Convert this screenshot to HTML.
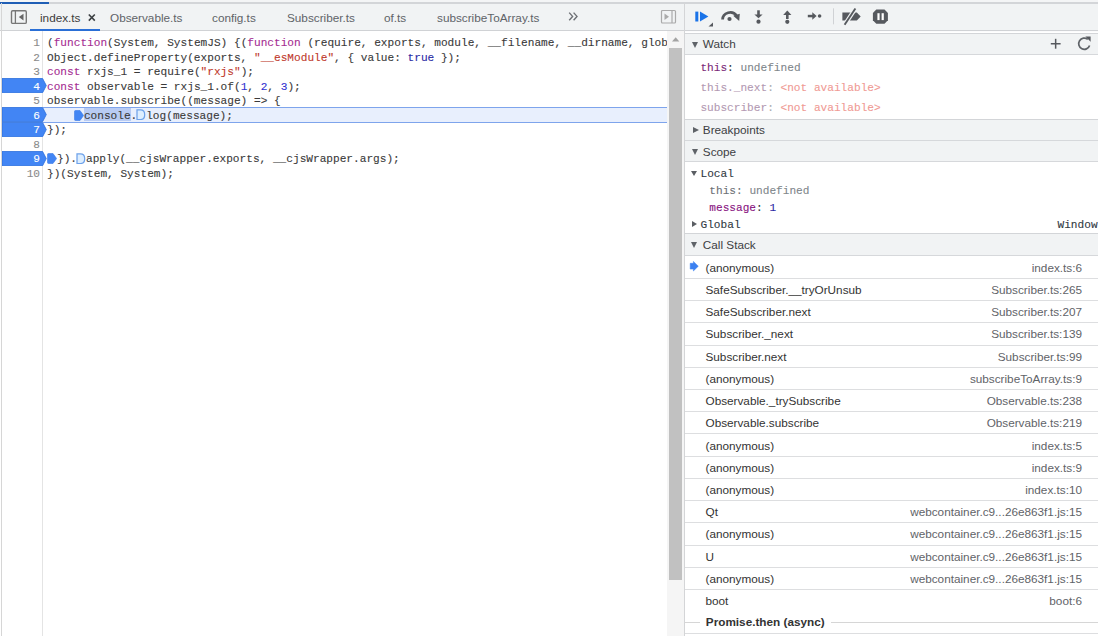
<!DOCTYPE html>
<html><head><meta charset="utf-8">
<style>
*{box-sizing:border-box;margin:0;padding:0}
html,body{width:1098px;height:636px;overflow:hidden;background:#fff;position:relative}
body{font-family:"Liberation Sans",sans-serif;color:#303942}
.abs{position:absolute}
.ui{font-family:"Liberation Sans",sans-serif;font-size:11.75px;white-space:nowrap;line-height:14px;color:#333}
.mono{font-family:"Liberation Mono",monospace;white-space:pre;-webkit-text-stroke:0.1px currentColor;font-size:11.13px;line-height:14.56px}
/* top strip */
#topw{left:0;top:0;width:1098px;height:2px;background:#f4f5f6}
#topblue{left:0;top:1.5px;width:48.5px;height:2px;background:#1f5eb5}
#topgrey{left:48.5px;top:2px;width:1050px;height:1.5px;background:#d3d5d8}
/* left tab bar */
#tabbar{left:0;top:3.5px;width:684px;height:27px;background:#f1f3f4;border-bottom:1px solid #d0d2d5}
#leftedge{left:1.2px;top:3px;width:1.1px;height:633px;background:#d6d6d6}
.tab{top:11px;color:#5f6368}
#tabul{left:30px;top:28.5px;width:70px;height:2px;background:#2a6fd6}
/* editor */
#editor{left:2.3px;top:31px;width:666px;height:605px;background:#fff;overflow:hidden}
#gutline{left:42.3px;top:31px;width:1px;height:605px;background:#e4e4e4}
.ln{left:0;width:40px;text-align:right;color:#8a8a8a}
.code{left:47px;color:#3a3a3a}
.kw{color:#a52d92}
.str{color:#c0392b}
.num{color:#3030d0}
.tru{color:#2b2ba5}
.bp{left:2px;height:14.6px;width:41px;background:#4285f4;border-top:1px solid #2a6fd9;border-bottom:1px solid #2a6fd9}
/* scrollbar */
#sbtrack{left:667px;top:31px;width:17px;height:605px;background:#f5f5f5}
#sbthumb{left:669.2px;top:48px;width:12.7px;height:531.7px;background:#c1c1c1}
/* split */
#split{left:684.2px;top:3px;width:1.1px;height:633px;background:#d4d5d7}
/* right */
#rtool{left:685px;top:3.5px;width:413px;height:27px;background:#f1f3f4;border-bottom:1px solid #d0d2d5}
.hdr{left:685px;width:413px;background:#f1f3f4;border-bottom:1px solid #d6d8db}
.hdrt{color:#3c4043}
.tri{width:0;height:0;border-left:3.5px solid transparent;border-right:3.5px solid transparent;border-top:6px solid #5f6368}
.trir{width:0;height:0;border-top:3.5px solid transparent;border-bottom:3.5px solid transparent;border-left:6px solid #5f6368}
.row{left:685px;width:413px;height:22.2px;border-bottom:1px solid #e6e6e6}
.fn{left:705.5px;color:#333}
.loc{right:16px;color:#5f6368;text-align:right}
</style></head><body>
<div class="abs" id="topw"></div>
<div class="abs" id="tabbar"></div>
<div class="abs" id="topblue"></div>
<div class="abs" id="topgrey"></div>

<!-- sidebar toggle -->
<svg class="abs" style="left:10px;top:9px" width="18" height="16" viewBox="0 0 18 16">
  <rect x="1.5" y="1.8" width="14.8" height="12.6" rx="1.2" fill="none" stroke="#777" stroke-width="1.4"/>
  <line x1="5.4" y1="1.8" x2="5.4" y2="14.4" stroke="#777" stroke-width="1.3"/>
  <path d="M13.5 4.8 L8.8 8.1 L13.5 11.4 Z" fill="#666"/>
</svg>

<div class="abs ui tab" style="left:40px;color:#3c3c3c">index.ts</div>
<svg class="abs" style="left:87px;top:12.6px" width="10" height="10" viewBox="0 0 10 10"><path d="M1.8 1.5 L7.8 7.6 M7.8 1.5 L1.8 7.6" stroke="#3c4043" stroke-width="1.6"/></svg>
<div class="abs ui tab" style="left:110px">Observable.ts</div>
<div class="abs ui tab" style="left:212px">config.ts</div>
<div class="abs ui tab" style="left:287px">Subscriber.ts</div>
<div class="abs ui tab" style="left:384px">of.ts</div>
<div class="abs ui tab" style="left:437px">subscribeToArray.ts</div>
<svg class="abs" style="left:566px;top:10px" width="14" height="13" viewBox="0 0 14 13"><path d="M3.2 2.6 L6.6 6.4 L3.2 10.2 M7.6 2.6 L11 6.4 L7.6 10.2" fill="none" stroke="#6d7075" stroke-width="1.4"/></svg>
<div class="abs" id="tabul"></div>
<svg class="abs" style="left:660px;top:9px" width="17" height="16" viewBox="0 0 17 16">
  <rect x="1.5" y="1.5" width="14" height="12.5" rx="1" fill="none" stroke="#aaa" stroke-width="1.2"/>
  <line x1="12" y1="1.5" x2="12" y2="14" stroke="#aaa" stroke-width="1.2"/>
  <path d="M4.5 4.5 L9 7.75 L4.5 11 Z" fill="#aaa"/>
</svg>

<div class="abs" id="leftedge"></div>
<div class="abs" id="editor"></div>
<div class="abs" id="gutline"></div>
<div class="abs" style="left:43px;top:106.5px;width:624px;height:16px;background:#e8effd;border-top:1.2px solid #7ea4ec;border-bottom:1.2px solid #7ea4ec"></div>
<div class="abs" style="left:83.9px;top:107.50px;width:46.8px;height:13.96px;background:#b8cbf3"></div>
<svg class="abs" style="left:2px;top:78.08px" width="46" height="15.2" viewBox="0 0 46 15.2"><path d="M0 0.5 H40.6 L44.3 7.6 L40.6 14.7 H0 Z" fill="#4285f4" stroke="#2b6fdc" stroke-width="0.8"/></svg>
<svg class="abs" style="left:2px;top:107.20px" width="46" height="15.2" viewBox="0 0 46 15.2"><path d="M0 0.5 H40.6 L44.3 7.6 L40.6 14.7 H0 Z" fill="#4285f4" stroke="#2b6fdc" stroke-width="0.8"/></svg>
<svg class="abs" style="left:2px;top:121.76px" width="46" height="15.2" viewBox="0 0 46 15.2"><path d="M0 0.5 H40.6 L44.3 7.6 L40.6 14.7 H0 Z" fill="#4285f4" stroke="#2b6fdc" stroke-width="0.8"/></svg>
<svg class="abs" style="left:2px;top:150.88px" width="46" height="15.2" viewBox="0 0 46 15.2"><path d="M0 0.5 H40.6 L44.3 7.6 L40.6 14.7 H0 Z" fill="#4285f4" stroke="#2b6fdc" stroke-width="0.8"/></svg>
<div class="abs mono code" style="left:47.00px;top:36.00px">(<span class="kw">function</span>(System, SystemJS) {(<span class="kw">function</span> (require, exports, module, __filename, __dirname, global) {</div>
<div class="abs mono code" style="left:47.00px;top:50.56px">Object.defineProperty(exports, <span class="str">"__esModule"</span>, { value: <span class="tru">true</span> });</div>
<div class="abs mono code" style="left:47.00px;top:65.12px"><span class="kw">const</span> rxjs_1 = require(<span class="str">"rxjs"</span>);</div>
<div class="abs mono code" style="left:47.00px;top:79.68px"><span class="kw">const</span> observable = rxjs_1.of(<span class="num">1</span>, <span class="num">2</span>, <span class="num">3</span>);</div>
<div class="abs mono code" style="left:47.00px;top:94.24px">observable.subscribe((message) =&gt; {</div>
<div class="abs mono code" style="left:83.90px;top:108.80px">console.</div>
<div class="abs mono code" style="left:146.20px;top:108.80px">log(message);</div>
<div class="abs mono code" style="left:47.00px;top:123.36px">});</div>

<div class="abs mono code" style="left:57.00px;top:152.48px">}).</div>
<div class="abs mono code" style="left:86.00px;top:152.48px">apply(__cjsWrapper.exports, __cjsWrapper.args);</div>
<div class="abs mono code" style="left:47.00px;top:167.04px">})(System, System);</div>
<div class="abs mono ln" style="top:36.00px;color:#8a8a8a">1</div>
<div class="abs mono ln" style="top:50.56px;color:#8a8a8a">2</div>
<div class="abs mono ln" style="top:65.12px;color:#8a8a8a">3</div>
<div class="abs mono ln" style="top:79.68px;color:#fff">4</div>
<div class="abs mono ln" style="top:94.24px;color:#8a8a8a">5</div>
<div class="abs mono ln" style="top:108.80px;color:#fff">6</div>
<div class="abs mono ln" style="top:123.36px;color:#fff">7</div>
<div class="abs mono ln" style="top:137.92px;color:#8a8a8a">8</div>
<div class="abs mono ln" style="top:152.48px;color:#fff">9</div>
<div class="abs mono ln" style="top:167.04px;color:#8a8a8a">10</div>
<svg class="abs" style="left:73.80px;top:109.80px" width="10" height="11" viewBox="0 0 10 11"><path d="M1.5 0.5 H6 L9.6 5.5 L6 10.5 H1.5 Q0.5 10.5 0.5 9.5 V1.5 Q0.5 0.5 1.5 0.5 Z" fill="#4285f4" stroke="#3a7be8" stroke-width="0.6"/></svg>
<svg class="abs" style="left:136.2px;top:109.2px" width="10" height="11" viewBox="0 0 10 11"><path d="M1 0.9 H4.4 Q8.7 0.9 8.7 5.7 Q8.7 10.5 4.4 10.5 H1 Z" fill="#ddeeff" stroke="#6ea2ea" stroke-width="1.25"/></svg>
<svg class="abs" style="left:47.00px;top:153.48px" width="10" height="11" viewBox="0 0 10 11"><path d="M1.5 0.5 H6 L9.6 5.5 L6 10.5 H1.5 Q0.5 10.5 0.5 9.5 V1.5 Q0.5 0.5 1.5 0.5 Z" fill="#4285f4" stroke="#3a7be8" stroke-width="0.6"/></svg>
<svg class="abs" style="left:76.2px;top:152.9px" width="10" height="11" viewBox="0 0 10 11"><path d="M1 0.9 H4.4 Q8.7 0.9 8.7 5.7 Q8.7 10.5 4.4 10.5 H1 Z" fill="#ddeeff" stroke="#6ea2ea" stroke-width="1.25"/></svg>

<div class="abs" id="sbtrack"></div>
<div class="abs" id="sbthumb"></div>
<svg class="abs" style="left:670px;top:35px" width="12" height="8" viewBox="0 0 12 8"><path d="M2 6.6 L5.7 2.3 L9.3 6.6 Z" fill="#a3a3a3"/></svg>
<div class="abs" id="split"></div>

<div class="abs" id="rtool"></div>

<!-- toolbar icons -->
<svg class="abs" style="left:685px;top:0px" width="413" height="31" viewBox="685 0 413 31">
  <rect x="695.3" y="11.6" width="3" height="9.9" fill="#1a73e8"/>
  <path d="M700 11.6 L708.4 16.55 L700 21.5 Z" fill="#1a73e8"/>
  <path d="M708.5 26.4 L713 22.6 L713 26.4 Z" fill="#56595e"/>
  <path d="M722.6 19.6 A7.6 7.2 0 0 1 736.6 15.8" fill="none" stroke="#56595e" stroke-width="2.8"/>
  <path d="M733.2 15.8 L739.8 13.8 L739.2 20.9 Z" fill="#56595e"/>
  <circle cx="729.5" cy="19" r="2.1" fill="#56595e"/>
  <rect x="757.2" y="10.3" width="2.6" height="5.5" fill="#56595e"/>
  <path d="M754.4 14.6 L762.6 14.6 L758.5 18.2 Z" fill="#56595e"/>
  <circle cx="758.5" cy="21.7" r="2.1" fill="#56595e"/>
  <path d="M783.2 14.9 L791.4 14.9 L787.3 10.6 Z" fill="#56595e"/>
  <rect x="786" y="14" width="2.6" height="5" fill="#56595e"/>
  <circle cx="787.3" cy="21.8" r="2.1" fill="#56595e"/>
  <rect x="807.8" y="14.8" width="5.8" height="2.5" fill="#56595e"/>
  <path d="M812.3 12.2 L816.6 16 L812.3 19.8 Z" fill="#56595e"/>
  <circle cx="819.6" cy="16" r="1.8" fill="#56595e"/>
  <rect x="833" y="8.3" width="1" height="16" fill="#d0d2d5"/>
  <path d="M842.4 12.4 H856.8 L860.7 16.5 L856.8 20.6 H842.4 Z" fill="#56595e"/>
  <path d="M855.4 8.5 L844.6 24.8" stroke="#f1f3f4" stroke-width="4.2"/>
  <path d="M855.4 8.5 L844.6 24.8" stroke="#56595e" stroke-width="1.9"/>
  <path d="M876.3 9.5 H884.5 L887.9 13 V20.2 L884.5 23.7 H876.3 L872.9 20.2 V13 Z" fill="#56595e"/>
  <rect x="877.4" y="13.2" width="2.2" height="6.9" fill="#fff"/>
  <rect x="881.6" y="13.2" width="2.2" height="6.9" fill="#fff"/>
</svg>
<div class="abs" style="left:685px;top:30.5px;width:413px;height:1.5px;background:#fbfbfc"></div>
<div class="abs hdr" style="top:32.5px;height:22px;border-top:1px solid #d3d5d8"></div>
<div class="abs tri" style="left:691.6px;top:41.5px"></div>
<div class="abs ui hdrt" style="left:702.8px;top:37px">Watch</div>
<svg class="abs" style="left:1045px;top:33px" width="53" height="21" viewBox="1045 33 53 21">
  <rect x="1050.8" y="43" width="9.8" height="1.5" fill="#56595e"/>
  <rect x="1054.9" y="38.8" width="1.5" height="9.9" fill="#56595e"/>
  <path d="M1089.6 45.5 A5.6 5.6 0 1 1 1087.8 39.3" fill="none" stroke="#5f6368" stroke-width="1.7"/>
  <path d="M1085.4 36.6 L1090.6 36.6 L1090.6 41.8 Z" fill="#56595e"/>
</svg>
<!-- watch body -->
<div class="abs mono" style="left:700.4px;top:60.8px;color:#7a2877">this<span style="color:#303942">: </span><span style="color:#80868b">undefined</span></div>
<div class="abs mono" style="left:700.4px;top:80.5px;color:#b399b2">this._next<span style="color:#a9acb0">: </span><span style="color:#f09a94">&lt;not available&gt;</span></div>
<div class="abs mono" style="left:700.4px;top:100.5px;color:#b399b2">subscriber<span style="color:#a9acb0">: </span><span style="color:#f09a94">&lt;not available&gt;</span></div>
<!-- breakpoints -->
<div class="abs hdr" style="top:118.5px;height:22px;border-top:1px solid #d3d5d8"></div>
<div class="abs trir" style="left:692.5px;top:126.5px"></div>
<div class="abs ui hdrt" style="left:702.8px;top:122.5px">Breakpoints</div>
<!-- scope -->
<div class="abs hdr" style="top:140.5px;height:21.5px"></div>
<div class="abs tri" style="left:691.6px;top:149px"></div>
<div class="abs ui hdrt" style="left:702.8px;top:144.5px">Scope</div>
<div class="abs" style="left:690.8px;top:171.1px;width:0;height:0;border-left:3.3px solid transparent;border-right:3.3px solid transparent;border-top:5.6px solid #5a5e63"></div>
<div class="abs mono" style="left:700.5px;top:166.8px;color:#303942">Local</div>
<div class="abs mono" style="left:709.3px;top:183.8px;color:#6c7075">this<span>: </span><span style="color:#80868b">undefined</span></div>
<div class="abs mono" style="left:709.3px;top:200.7px;color:#881280">message<span style="color:#303942">: </span><span style="color:#2a2aa5">1</span></div>
<div class="abs" style="left:691.5px;top:220.7px;width:0;height:0;border-top:3.3px solid transparent;border-bottom:3.3px solid transparent;border-left:5.8px solid #5a5e63"></div>
<div class="abs mono" style="left:700.5px;top:217.8px;color:#303942">Global</div>
<div class="abs mono" style="left:1057.5px;top:217.8px;color:#303942">Window</div>
<!-- call stack -->
<div class="abs hdr" style="top:233px;height:22.5px;border-top:1px solid #d3d5d8"></div>
<div class="abs tri" style="left:691.3px;top:241.5px"></div>
<div class="abs ui hdrt" style="left:702.8px;top:237.5px">Call Stack</div>
<div class="abs" style="left:685px;top:277.92px;width:413px;height:1px;background:#dddee0"></div>
<div class="abs ui fn" style="top:260.80px">(anonymous)</div>
<div class="abs ui loc" style="top:260.80px">index.ts:6</div>
<div class="abs" style="left:685px;top:300.14px;width:413px;height:1px;background:#dddee0"></div>
<div class="abs ui fn" style="top:283.02px">SafeSubscriber.__tryOrUnsub</div>
<div class="abs ui loc" style="top:283.02px">Subscriber.ts:265</div>
<div class="abs" style="left:685px;top:322.36px;width:413px;height:1px;background:#dddee0"></div>
<div class="abs ui fn" style="top:305.24px">SafeSubscriber.next</div>
<div class="abs ui loc" style="top:305.24px">Subscriber.ts:207</div>
<div class="abs" style="left:685px;top:344.58px;width:413px;height:1px;background:#dddee0"></div>
<div class="abs ui fn" style="top:327.46px">Subscriber._next</div>
<div class="abs ui loc" style="top:327.46px">Subscriber.ts:139</div>
<div class="abs" style="left:685px;top:366.80px;width:413px;height:1px;background:#dddee0"></div>
<div class="abs ui fn" style="top:349.68px">Subscriber.next</div>
<div class="abs ui loc" style="top:349.68px">Subscriber.ts:99</div>
<div class="abs" style="left:685px;top:389.02px;width:413px;height:1px;background:#dddee0"></div>
<div class="abs ui fn" style="top:371.90px">(anonymous)</div>
<div class="abs ui loc" style="top:371.90px">subscribeToArray.ts:9</div>
<div class="abs" style="left:685px;top:411.24px;width:413px;height:1px;background:#dddee0"></div>
<div class="abs ui fn" style="top:394.12px">Observable._trySubscribe</div>
<div class="abs ui loc" style="top:394.12px">Observable.ts:238</div>
<div class="abs" style="left:685px;top:433.46px;width:413px;height:1px;background:#dddee0"></div>
<div class="abs ui fn" style="top:416.34px">Observable.subscribe</div>
<div class="abs ui loc" style="top:416.34px">Observable.ts:219</div>
<div class="abs" style="left:685px;top:455.68px;width:413px;height:1px;background:#dddee0"></div>
<div class="abs ui fn" style="top:438.56px">(anonymous)</div>
<div class="abs ui loc" style="top:438.56px">index.ts:5</div>
<div class="abs" style="left:685px;top:477.90px;width:413px;height:1px;background:#dddee0"></div>
<div class="abs ui fn" style="top:460.78px">(anonymous)</div>
<div class="abs ui loc" style="top:460.78px">index.ts:9</div>
<div class="abs" style="left:685px;top:500.12px;width:413px;height:1px;background:#dddee0"></div>
<div class="abs ui fn" style="top:483.00px">(anonymous)</div>
<div class="abs ui loc" style="top:483.00px">index.ts:10</div>
<div class="abs" style="left:685px;top:522.34px;width:413px;height:1px;background:#dddee0"></div>
<div class="abs ui fn" style="top:505.22px">Qt</div>
<div class="abs ui loc" style="top:505.22px">webcontainer.c9...26e863f1.js:15</div>
<div class="abs" style="left:685px;top:544.56px;width:413px;height:1px;background:#dddee0"></div>
<div class="abs ui fn" style="top:527.44px">(anonymous)</div>
<div class="abs ui loc" style="top:527.44px">webcontainer.c9...26e863f1.js:15</div>
<div class="abs" style="left:685px;top:566.78px;width:413px;height:1px;background:#dddee0"></div>
<div class="abs ui fn" style="top:549.66px">U</div>
<div class="abs ui loc" style="top:549.66px">webcontainer.c9...26e863f1.js:15</div>
<div class="abs" style="left:685px;top:589.00px;width:413px;height:1px;background:#dddee0"></div>
<div class="abs ui fn" style="top:571.88px">(anonymous)</div>
<div class="abs ui loc" style="top:571.88px">webcontainer.c9...26e863f1.js:15</div>
<div class="abs ui fn" style="top:594.10px">boot</div>
<div class="abs ui loc" style="top:594.10px">boot:6</div>
<svg class="abs" style="left:688px;top:259px" width="12" height="14" viewBox="688 259 12 14"><path d="M690.2 263.3 H693.4 V261.4 L698.3 266.2 L693.4 271 V269.1 H690.2 Z" fill="#3b80f0" stroke="#3b80f0" stroke-width="0.5" stroke-linejoin="round"/></svg>
<div class="abs" style="left:685px;top:622.2px;width:15px;height:1px;background:#d6d6d6"></div>
<div class="abs" style="left:831px;top:622.2px;width:267px;height:1px;background:#d6d6d6"></div>
<div class="abs ui" style="left:705.8px;top:615px;font-weight:bold;color:#333;-webkit-text-stroke:0">Promise.then (async)</div>
<div class="abs" style="left:685px;top:633.00px;width:413px;height:1px;background:#dddee0"></div>
</body></html>
